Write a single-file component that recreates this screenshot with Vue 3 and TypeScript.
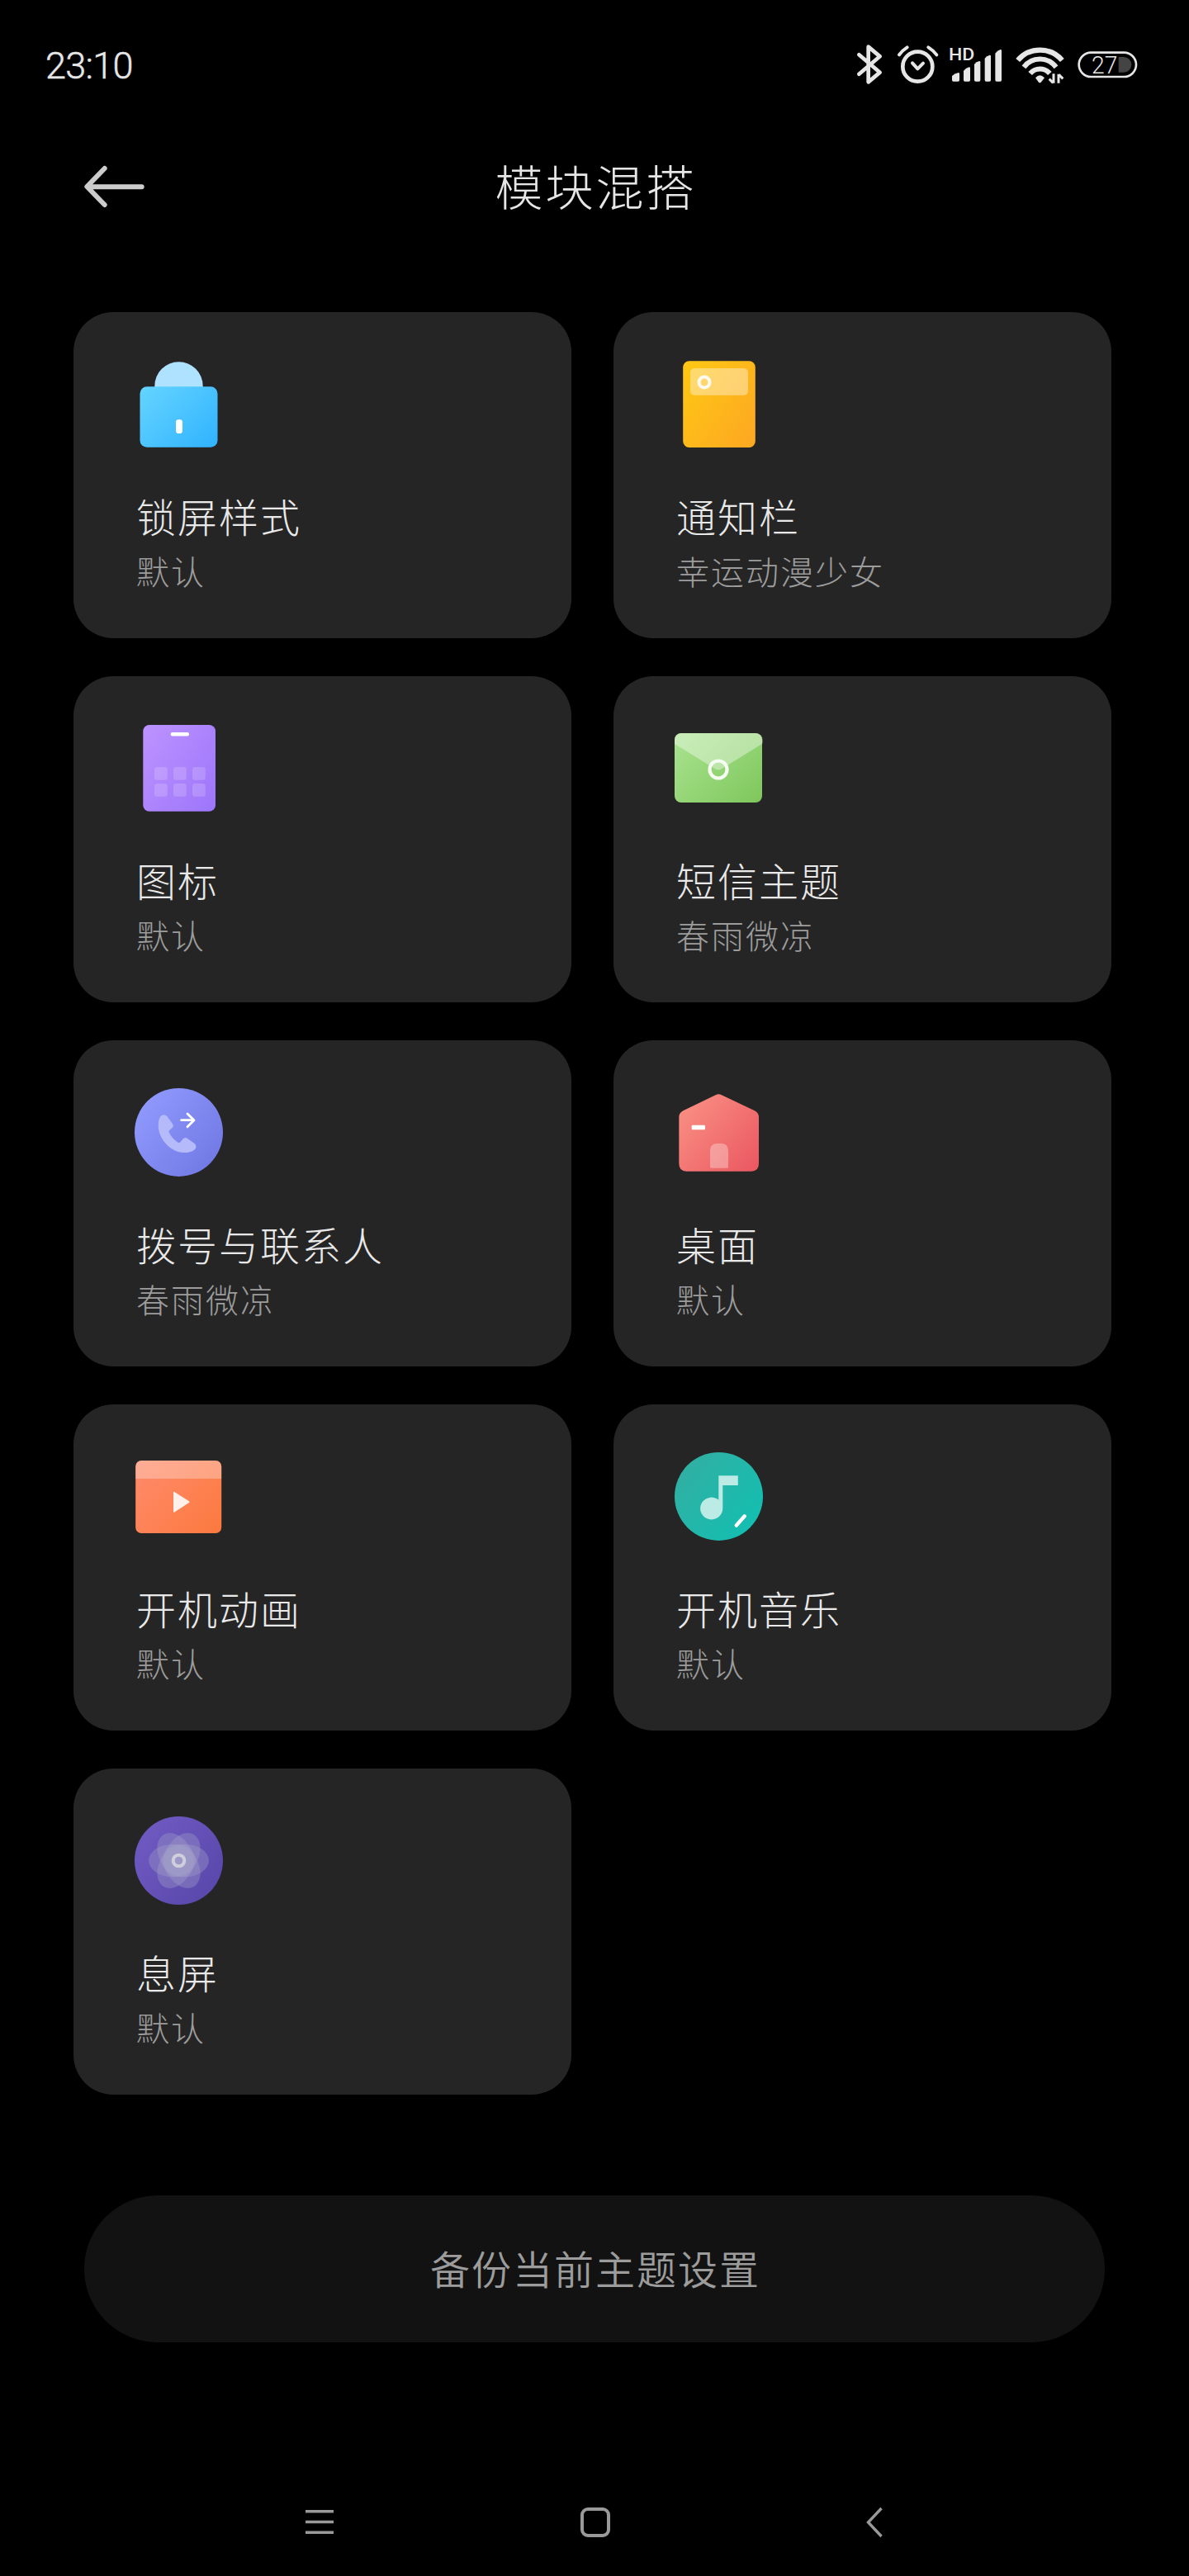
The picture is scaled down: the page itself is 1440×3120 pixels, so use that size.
<script setup lang="ts">
type IconName = 'lock' | 'panel' | 'grid' | 'mail' | 'phone' | 'home' | 'video' | 'music' | 'aod'

interface ThemeModule {
  icon: IconName
  title: string
  value: string
}

const modules: ThemeModule[] = [
  { icon: 'lock', title: '锁屏样式', value: '默认' },
  { icon: 'panel', title: '通知栏', value: '幸运动漫少女' },
  { icon: 'grid', title: '图标', value: '默认' },
  { icon: 'mail', title: '短信主题', value: '春雨微凉' },
  { icon: 'phone', title: '拨号与联系人', value: '春雨微凉' },
  { icon: 'home', title: '桌面', value: '默认' },
  { icon: 'video', title: '开机动画', value: '默认' },
  { icon: 'music', title: '开机音乐', value: '默认' },
  { icon: 'aod', title: '息屏', value: '默认' },
]

const gradients: Record<IconName, [string, string]> = {
  lock: ['#63d3ff', '#32b4ff'],
  panel: ['#fec714', '#fda822'],
  grid: ['#bc92ff', '#9e76fa'],
  mail: ['#a8e28e', '#80c85e'],
  phone: ['#929cff', '#6f76e2'],
  home: ['#fa9184', '#eb5962'],
  video: ['#ff8a6a', '#fc7a40'],
  music: ['#34aea2', '#10c0b2'],
  aod: ['#705bc2', '#5846aa'],
}

const fillOf = (name: IconName): string => `url(#fill-${name})`
const tileXs = [98, 121, 144]
const tileYs = [110, 130]
const petals = [0, 60, 120, 180, 240, 300]
</script>

<template>
  <div class="screen">
    <header class="status">
      <span class="clock">23:10</span>
      <div class="indicators">
        <svg class="ind bluetooth" width="34" height="56" viewBox="48 30 102 168" fill="none" stroke="#e6e6e6" stroke-width="14" stroke-linecap="round" stroke-linejoin="round">
          <path d="M61 79 L137 143 L95 178 V50 L137 85 L61 149" />
        </svg>
        <svg class="ind alarm" width="54" height="56" viewBox="195 30 162 168" fill="none" stroke="#e6e6e6" stroke-linecap="round" stroke-linejoin="round">
          <circle cx="274" cy="122" r="54" stroke-width="14" />
          <path d="M255 109 L274 130 L294 110" stroke-width="12" />
          <path d="M207 79 Q217 64 236 52 M313 52 Q331 63 343 79" stroke-width="12" />
        </svg>
        <svg class="ind signal" width="68" height="56" viewBox="384 30 204 168" fill="#e6e6e6">
          <text x="387" y="100" class="hd" textLength="94" lengthAdjust="spacingAndGlyphs">HD</text>
          <path d="M399 156 Q408 147 422 144 Q426 144 426 148 V171 Q426 176 421 176 H404 Q399 176 399 171Z" />
          <path d="M441 137 Q450 126 461 124 Q465 124 465 128 V171 Q465 176 460 176 H446 Q441 176 441 171Z" />
          <path d="M480 113 Q488 104 498 102 Q502 102 502 106 V171 Q502 176 497 176 H485 Q480 176 480 171Z" />
          <path d="M518 92 Q525 83 536 80 Q540 80 540 84 V171 Q540 176 535 176 H523 Q518 176 518 171Z" />
          <path d="M556 74 Q563 63 575 60 Q579 60 579 64 V171 Q579 176 574 176 H561 Q556 176 556 171Z" />
        </svg>
        <svg class="ind wifi" width="64" height="56" viewBox="622 30 192 168" fill="none" stroke="#e6e6e6">
          <path d="M636 99 A106 106 0 0 1 797 99" stroke-width="19" />
          <path d="M658 124 A73 73 0 0 1 775 124" stroke-width="18" />
          <path d="M681 147 A46 46 0 0 1 752 147" stroke-width="18" />
          <path d="M700 163 Q716 145 733 163 L720 179 Q716 182 712 179Z" fill="#e6e6e6" stroke="none" />
          <path d="M766 148 V182 M750 167 L764 181 M784 182 V149 M785 151 L800 166" stroke-width="9" />
        </svg>
        <svg class="ind battery" width="76" height="56" viewBox="848 30 228 168">
          <rect x="859" y="71" width="208" height="88" rx="44" fill="none" stroke="#e6e6e6" stroke-width="8" />
          <path d="M1003 87 H1022 A28 28 0 0 1 1022 143 H1003Z" fill="#444" />
          <text x="905" y="147" class="percent" textLength="94" lengthAdjust="spacingAndGlyphs">27</text>
        </svg>
      </div>
    </header>

    <div class="titlebar">
      <svg class="back" width="76" height="52" viewBox="303 508 228 156" fill="none" stroke="#ccc" stroke-width="18" stroke-linecap="round" stroke-linejoin="round">
        <path d="M380 520 L316 586 L380 652 M318 586.500 H515" />
      </svg>
      <h1 class="heading">模块混搭</h1>
    </div>

    <main class="grid">
      <section v-for="m in modules" :key="m.icon" class="card">
        <svg class="icon" width="128" height="128" viewBox="64 48 128 128">
          <defs>
            <linearGradient :id="`fill-${m.icon}`" x1="0" y1="0.1" x2="1" y2="0.9">
              <stop offset="0" :stop-color="gradients[m.icon][0]" />
              <stop offset="1" :stop-color="gradients[m.icon][1]" />
            </linearGradient>
          </defs>

          <g v-if="m.icon === 'lock'">
            <path d="M98.300 91 V89.500 A29.200 29.200 0 0 1 156.700 89.500 V91Z" fill="#aee2ff" />
            <rect x="80.500" y="90.300" width="94" height="73.400" rx="8.500" :fill="fillOf('lock')" />
            <rect x="124" y="130" width="8" height="17" rx="3.600" fill="#fff" />
          </g>

          <g v-else-if="m.icon === 'panel'">
            <rect x="84.200" y="59.300" width="87.600" height="104.700" rx="7.500" :fill="fillOf('panel')" />
            <rect x="93" y="68" width="70" height="32.700" rx="5" fill="#fff" fill-opacity=".38" />
            <circle cx="110" cy="85" r="6.500" fill="none" stroke="#fffaf0" stroke-width="4" />
          </g>

          <g v-else-if="m.icon === 'grid'">
            <rect x="84.300" y="59" width="87.700" height="104.700" rx="7.500" :fill="fillOf('grid')" />
            <rect x="117.700" y="68" width="22.300" height="4.400" rx="2" fill="#fff" />
            <template v-for="y in tileYs" :key="y">
              <rect v-for="x in tileXs" :key="x" :x="x" :y="y" width="15.800" height="15.800" rx="3" fill="#fff" fill-opacity=".17" />
            </template>
          </g>

          <g v-else-if="m.icon === 'mail'">
            <rect x="74" y="69" width="106" height="84" rx="8" :fill="fillOf('mail')" />
            <path d="M74 82 V77 A8 8 0 0 1 82 69 H173 A8 8 0 0 1 180.700 77 V80.500 L180 82 L130.500 112.500 Q127 114.500 123.500 112.500Z" fill="#fff" fill-opacity=".38" />
            <circle cx="127" cy="113" r="10.500" fill="none" stroke="#f6fcf3" stroke-width="4.200" />
          </g>

          <g v-else-if="m.icon === 'phone'">
            <circle cx="127.500" cy="111.400" r="53.500" :fill="fillOf('phone')" />
            <g transform="translate(-9 -10) scale(.33333)">
              <path d="M346 304 Q358 296 367 306 L386 332 Q393 341 386 348 L376 356 Q371 360 375 367 C384 383 394 393 407 401 Q412 404 416 399 L424 389 Q431 381 440 386 L466 404 Q477 414 469 425 C458 438 430 441 409 436 C371 424 341 389 336 352 C334 330 337 311 346 304Z" fill="#b5bafb" />
              <path d="M419 320 H464 M441 297 L465 320 L441 344" fill="none" stroke="#fff" stroke-width="8.500" stroke-linecap="round" stroke-linejoin="round" />
            </g>
          </g>

          <g v-else-if="m.icon === 'home'" transform="translate(-13 -10) scale(.33333)">
            <path d="M410 229 Q421 223 432 229 L552 286 Q567 294 567 310 V478 Q567 506 540 506 H304 Q277 506 277 478 V310 Q277 294 292 286Z" :fill="fillOf('home')" />
            <rect x="323" y="338" width="49" height="17" rx="4" fill="#fff" />
            <path d="M390 490 V432 Q390 405 416 405 H430 Q456 405 456 432 V490 Q456 494 452 494 H394 Q390 494 390 490Z" fill="#fff" fill-opacity=".32" />
          </g>

          <g v-else-if="m.icon === 'video'">
            <rect x="75.200" y="68" width="104" height="88" rx="7" :fill="fillOf('video')" />
            <path d="M75.200 90 V75 A7 7 0 0 1 82.200 68 H172.200 A7 7 0 0 1 179.200 75 V90Z" fill="#fff" fill-opacity=".29" />
            <path d="M121 106.500 Q121 105 122.300 106 L140 117.300 Q141.200 118.200 140 119 L122.300 130.500 Q121 131.300 121 130Z" fill="#fff0ea" />
          </g>

          <g v-else-if="m.icon === 'music'">
            <circle cx="127.500" cy="111.400" r="53.500" :fill="fillOf('music')" />
            <path d="M127.300 86.300 H150.800 V98 H132.300 V126 A13.600 13.400 0 1 1 127.300 115.600Z" fill="#bceae5" />
            <path d="M148.800 146.500 L158.800 135.300" stroke="#fff" stroke-width="4.400" stroke-linecap="round" />
          </g>

          <g v-else>
            <circle cx="127.500" cy="111.500" r="53.500" :fill="fillOf('aod')" />
            <ellipse v-for="a in petals" :key="a" cx="135.200" cy="111.500" rx="28.700" ry="19.700" fill="#a19fc8" fill-opacity=".38" :transform="`rotate(${a} 127.500 111.500)`" />
            <circle cx="127.500" cy="111.500" r="6.800" fill="none" stroke="#cfcedc" stroke-width="4" />
          </g>
        </svg>
        <h2 class="name">{{ m.title }}</h2>
        <p class="value">{{ m.value }}</p>
      </section>
    </main>

    <button class="backup" type="button">备份当前主题设置</button>

    <nav class="nav">
      <svg width="48" height="48" viewBox="0 0 48 48" stroke="#999" stroke-width="3.600">
        <path d="M7 10.700 H41 M7 23.500 H41 M7 36.200 H41" />
      </svg>
      <svg width="48" height="48" viewBox="2 0 48 48" fill="none" stroke="#999" stroke-width="4">
        <rect x="8" y="8" width="32" height="32" rx="7" />
      </svg>
      <svg width="48" height="48" viewBox="0 0 48 48" fill="none" stroke="#999" stroke-width="3.400">
        <path d="M32.500 7 L16.500 24 L32.500 41" />
      </svg>
    </nav>
  </div>
</template>

<style>
html,
body {
  background: #000;
}
</style>

<style scoped>
.screen {
  box-sizing: border-box;
  width: 1440px;
  height: 3120px;
  overflow: hidden;
  background: #000;
  font-family: "Noto Sans CJK SC", sans-serif;
  font-weight: 300;
}

.status {
  display: flex;
  align-items: center;
  justify-content: space-between;
  box-sizing: border-box;
  height: 160px;
  padding: 0 61px 0 55px;
}

.clock {
  font: 300 45px/60px Roboto, sans-serif;
  color: #e6e6e6;
  letter-spacing: -0.7px;
  -webkit-text-stroke: 0.5px #e6e6e6;
}

.indicators {
  display: flex;
  align-items: center;
  margin-bottom: 4px;
}

.ind {
  display: block;
  flex: none;
}

.alarm {
  margin-left: 15px;
}

.signal {
  margin-left: 9px;
}

.wifi,
.battery {
  margin-left: 11.500px;
}

.hd {
  font: 500 60px Roboto, sans-serif;
}

.percent {
  font: 300 87px Roboto, sans-serif;
  fill: #e6e6e6;
}

.titlebar {
  display: grid;
  grid-template-columns: 300px 1fr 300px;
  align-items: center;
  height: 132px;
}

.back {
  display: block;
  margin-left: 101px;
}

.heading {
  margin: 0 0 4px;
  font-size: 58px;
  font-weight: 300;
  line-height: 80px;
  letter-spacing: 3px;
  text-indent: 3px;
  text-align: center;
  color: #e6e6e6;
}

.grid {
  display: grid;
  grid-template-columns: 603px 603px;
  grid-auto-rows: 395px;
  gap: 46px 51px;
  margin: 86px 0 0 89px;
}

.card {
  box-sizing: border-box;
  padding: 48px 64px 0;
  border-radius: 48px;
  background: #252525;
}

.icon {
  display: block;
}

.name {
  margin: 40px 0 0 12px;
  font-size: 48px;
  font-weight: 300;
  line-height: 60px;
  letter-spacing: 2px;
  white-space: nowrap;
  color: #e9e9e9;
}

.value {
  margin: 12px 0 0 12px;
  font-size: 40px;
  line-height: 50px;
  letter-spacing: 2px;
  white-space: nowrap;
  color: #9c9c9c;
}

.backup {
  display: block;
  width: 1236px;
  height: 178px;
  margin: 122px 0 0 102px;
  padding: 0 0 4px;
  border: 0;
  border-radius: 89px;
  background: #121212;
  color: #9c9c9c;
  font: 350 48px/60px "Noto Sans CJK SC", sans-serif;
  letter-spacing: 2px;
  text-indent: 2px;
}

.nav {
  display: grid;
  grid-template-columns: repeat(3, 336px);
  justify-items: center;
  margin: 194px 0 0 219px;
}
</style>
